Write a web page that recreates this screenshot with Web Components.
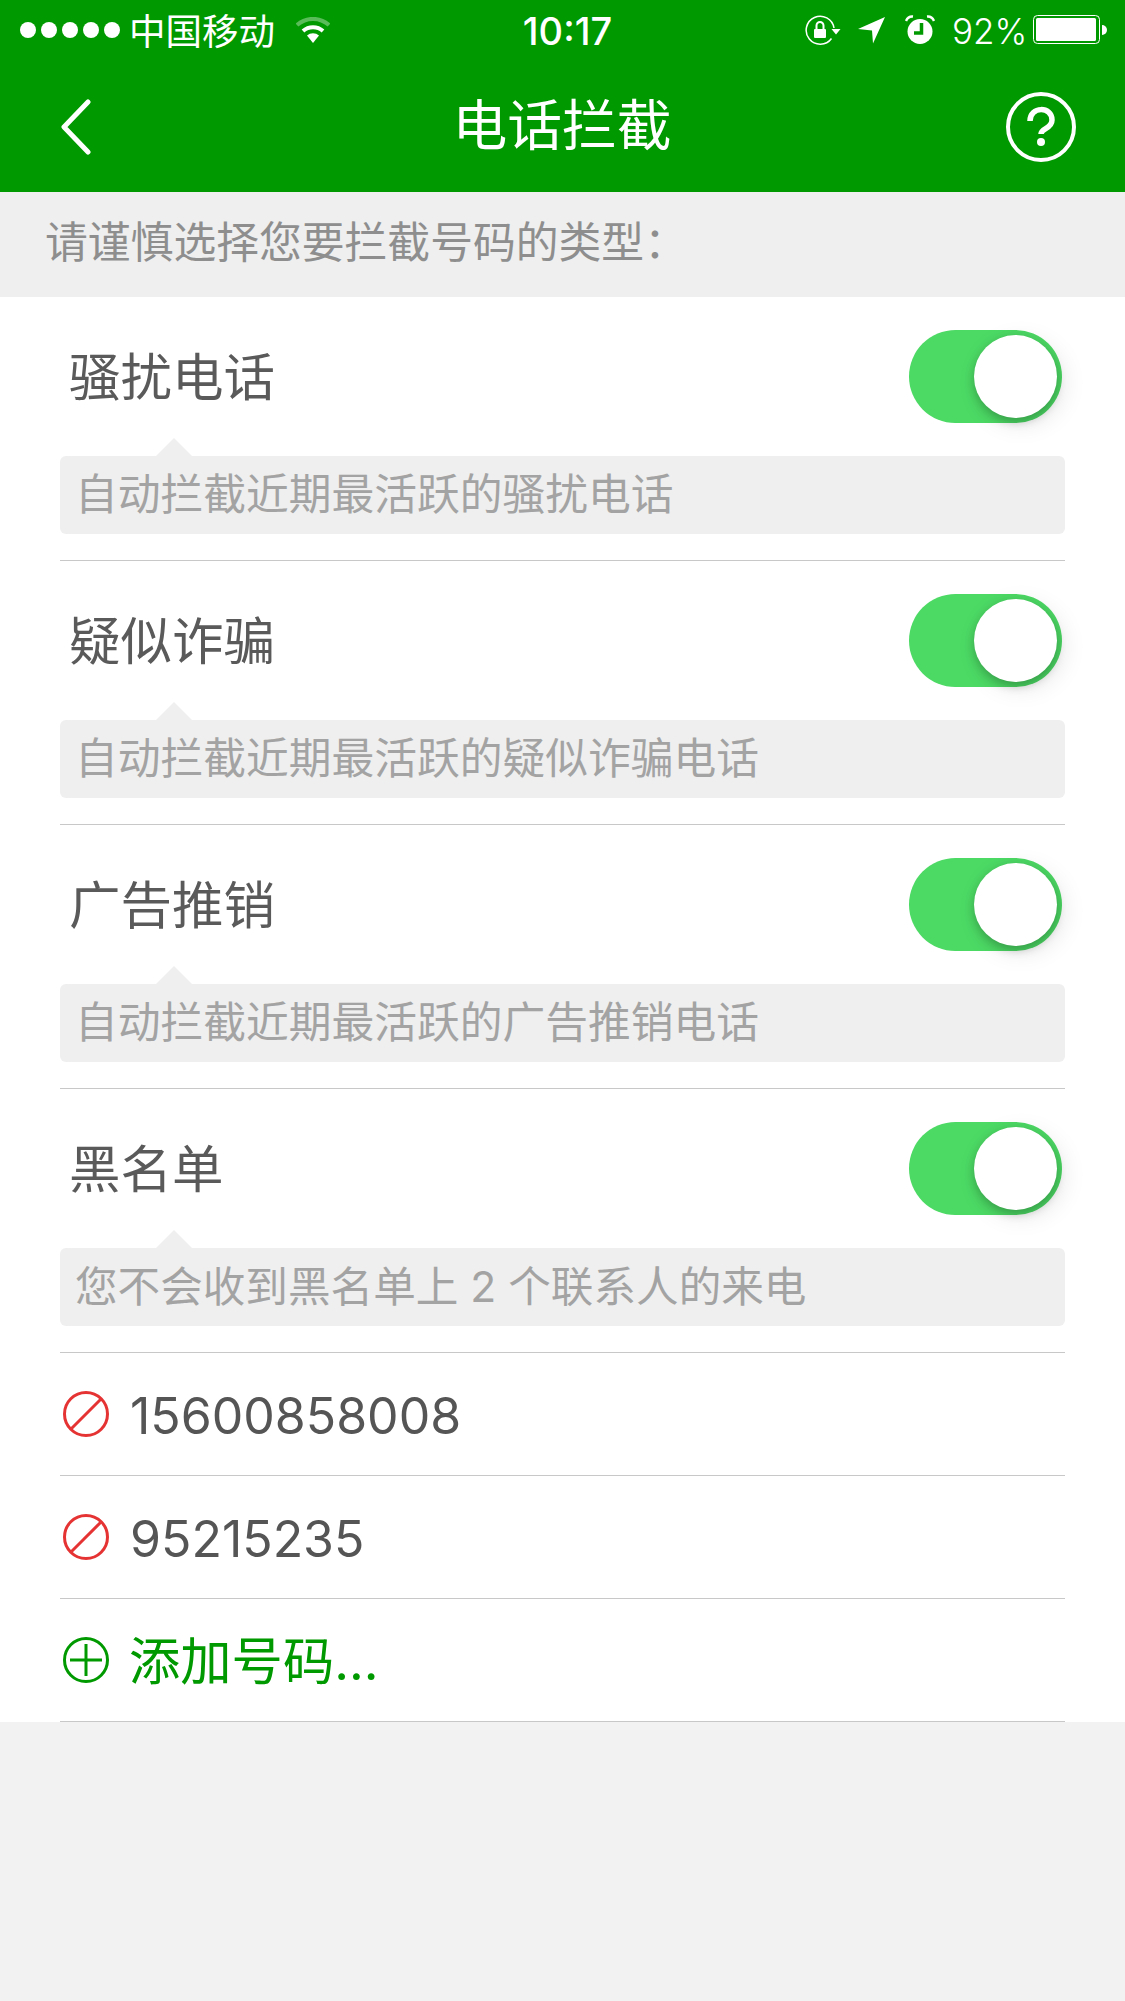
<!DOCTYPE html>
<html lang="zh-CN"><head><meta charset="utf-8"><title>电话拦截</title>
<style>
html,body{margin:0;padding:0;background:#f2f2f2}
body{width:1125px;height:2001px;overflow:hidden;font-family:"Liberation Sans","Noto Sans CJK SC",sans-serif}
app-page{display:block}
</style></head><body>
<app-page>
  <status-bar></status-bar>
  <nav-bar>电话拦截</nav-bar>
  <section-note>请谨慎选择您要拦截号码的类型：</section-note>
  <block-list>
    <toggle-row label="骚扰电话" desc="自动拦截近期最活跃的骚扰电话"></toggle-row>
    <toggle-row label="疑似诈骗" desc="自动拦截近期最活跃的疑似诈骗电话"></toggle-row>
    <toggle-row label="广告推销" desc="自动拦截近期最活跃的广告推销电话"></toggle-row>
    <toggle-row label="黑名单" desc="您不会收到黑名单上 2 个联系人的来电" tight></toggle-row>
    <number-row kind="block">15600858008</number-row>
    <number-row kind="block">95215235</number-row>
    <number-row kind="add">添加号码...</number-row>
  </block-list>
</app-page>
<script>
const CJK='Inter,"Noto Sans CJK SC",sans-serif';
function def(name,html){
  customElements.define(name,class extends HTMLElement{
    constructor(){super();const r=this.attachShadow({mode:'open'});r.innerHTML=typeof html==='function'?html(this):html;}
  });
}
def('status-bar',`<style>
:host{display:flex;align-items:center;height:60px;background:#009900;color:#fff;font-family:${CJK};box-sizing:border-box;padding-left:20px}
.dots{display:flex;gap:5px}.dots i{width:16px;height:16px;border-radius:50%;background:#fff;display:block}
.car{font-size:36.500px;line-height:60px;padding-top:3px;margin-left:9px;width:146px;white-space:nowrap}
svg{display:block;flex:none}
.wifi{margin-left:21px}
.time{font-size:38px;font-weight:500;margin-left:190px;width:95px;text-align:center;line-height:60px;white-space:nowrap;padding-top:1px}
.pct{font-size:35px;font-weight:300;margin-left:17px;line-height:60px;padding-top:2px;width:71px;white-space:nowrap}
</style>
<div class="dots"><i></i><i></i><i></i><i></i><i></i></div>
<span class="car">中国移动</span>
<svg class="wifi" width="34" height="26" viewBox="0 0 34 26"><path d="M1 8 A24 24 0 0 1 33 8" fill="none" stroke="#fff" stroke-opacity=".35" stroke-width="4"/><path d="M7 14 A15 15 0 0 1 27 14" fill="none" stroke="#fff" stroke-width="4"/><path d="M11 18.500 A9 9 0 0 1 23 18.500 L17 26 Z" fill="#fff"/></svg>
<span class="time">10:17</span>
<svg style="margin-left:190px" width="36" height="32" viewBox="0 0 36 32"><path d="M29 14 A14 14 0 1 0 26.500 24.500" fill="none" stroke="#fff" stroke-width="1.500"/><path d="M26.500 15 h9 l-4.500 5.500 z" fill="#fff"/><rect x="9" y="15" width="12" height="9" rx="1" fill="#fff"/><path d="M11.500 15 v-3.500 a3.500 3.500 0 0 1 7 0 v3.500" fill="none" stroke="#fff" stroke-width="2"/></svg>
<svg style="margin-left:17px" width="28" height="27" viewBox="0 0 28 27"><path d="M0 12 L27 0 L15 26.500 L14 13.500 Z" fill="#fff"/></svg>
<svg style="margin-left:19px" width="30" height="30" viewBox="0 0 30 30"><circle cx="15" cy="16.500" r="12.500" fill="#fff"/><path d="M1 6 Q3 1 8 1.500 M29 6 Q27 1 22 1.500" fill="none" stroke="#fff" stroke-width="2.500"/><path d="M16.500 8 V18 H9" fill="none" stroke="#009900" stroke-width="3.500"/></svg>
<span class="pct">92%</span>
<svg style="margin-left:10px" width="74" height="30" viewBox="0 0 74 30"><rect x=".5" y=".5" width="66" height="28" rx="4" fill="none" stroke="#fff"/><rect x="3" y="3" width="60" height="23" rx="1.500" fill="#fff"/><path d="M69 10 a5 5 0 0 1 0 10 z" fill="#fff"/></svg>`);
def('nav-bar',`<style>
:host{display:flex;align-items:center;height:132px;background:#009900;color:#fff;box-sizing:border-box;padding:0 48px 0 60px;font-family:${CJK}}
.t{flex:1;text-align:center;font-size:54.800px;line-height:132px;padding-bottom:3px;margin-left:27px}
svg{display:block;flex:none;margin-top:2px}
</style>
<svg width="32" height="56" viewBox="0 0 32 56"><path d="M28 3 L4 28 L28 53" fill="none" stroke="#fff" stroke-width="5" stroke-linecap="round" stroke-linejoin="round"/></svg>
<div class="t"><slot></slot></div>
<svg width="72" height="72" viewBox="0 0 72 72"><circle cx="36" cy="36" r="33" fill="none" stroke="#fff" stroke-width="4"/><path d="M25 30 C25 15 47 15 47 29 C47 38 36 37 36 43" fill="none" stroke="#fff" stroke-width="5.500"/><circle cx="36" cy="51" r="4" fill="#fff"/></svg>`);
def('section-note',`<style>
:host{display:block;height:105px;background:#efefef;color:#8e8e8e;font-family:${CJK};font-size:42.800px;line-height:102px;padding-left:45px;white-space:nowrap}
</style><slot></slot>`);
def('block-list',`<style>:host{display:block;background:#fff}</style><slot></slot>`);
def('toggle-row',(h)=>`<style>
:host{display:block;margin:0 60px;height:264px;box-sizing:border-box;padding-top:33px;border-bottom:1px solid #c8c8c8;font-family:${CJK}}
.top{display:flex;align-items:center;justify-content:space-between;height:93px;padding:0 3px 0 9px}
.lab{font-size:51.500px;color:#5a5a5a;line-height:93px;padding-top:1px}
.note{position:relative;margin-top:33px;height:78px;background:#efefef;border-radius:6px;color:#a3a3a3;font-size:${h.hasAttribute('tight')?42.6:42.75}px;line-height:78px;padding-left:15px;white-space:nowrap}
.note::before{content:"";position:absolute;left:96px;top:-18px;width:0;height:0;border-left:18px solid transparent;border-right:18px solid transparent;border-bottom:18px solid #efefef}
.sw{position:relative;width:153px;height:93px;border-radius:47px;background:#4cd964;flex:none}
.k{position:absolute;left:65px;top:5px;width:83px;height:83px;border-radius:50%;background:#fff;box-shadow:0 4px 10px rgba(0,0,0,.22),6px 6px 24px rgba(0,0,0,.1)}
</style>
<div class="top"><span class="lab">${h.getAttribute('label')}</span><div class="sw"><div class="k"></div></div></div>
<div class="note">${h.getAttribute('desc')}</div>`);
def('number-row',(h)=>{
 const add=h.getAttribute('kind')==='add';
 const ic=add
  ?`<svg width="46" height="46" viewBox="0 0 46 46"><circle cx="23" cy="23" r="21.500" fill="none" stroke="#009900" stroke-width="3"/><path d="M7 23H39M23 7V39" stroke="#009900" stroke-width="3"/></svg>`
  :`<svg width="46" height="46" viewBox="0 0 46 46"><circle cx="23" cy="23" r="21.500" fill="none" stroke="#e53333" stroke-width="3"/><path d="M8.500 37.500L37.500 8.500" stroke="#e53333" stroke-width="3"/></svg>`;
 return `<style>
:host{display:flex;align-items:center;margin:0 60px;height:123px;box-sizing:border-box;border-bottom:1px solid #c8c8c8;padding-left:3px;font-family:${CJK};font-size:${add?51.3:50}px;color:${add?'#009900':'#555'}}
svg{display:block;flex:none;margin-right:${add?20:21}px}
span{padding:${add?'0 0 5px':'3px 0 0'}}
</style>${ic}<span><slot></slot></span>`;
});
def('app-page',`<style>:host{display:block}</style><slot></slot>`);
</script>
</body></html>
